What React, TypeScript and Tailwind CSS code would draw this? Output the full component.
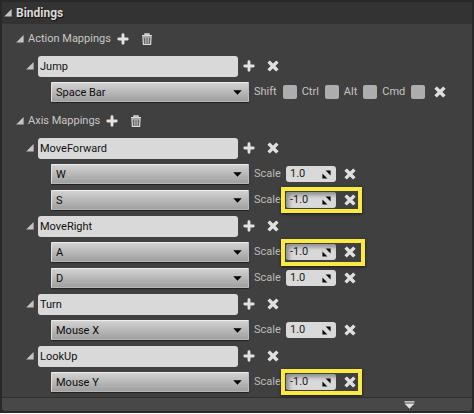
import type { ReactNode } from "react";

type Highlight = "normal" | "wide";
type Binding = { key: string; scale: string; highlight?: Highlight };
type Axis = { name: string; bindings: Binding[] };

const axes: Axis[] = [
  {
    name: "MoveForward",
    bindings: [
      { key: "W", scale: "1.0" },
      { key: "S", scale: "-1.0", highlight: "normal" },
    ],
  },
  {
    name: "MoveRight",
    bindings: [
      { key: "A", scale: "-1.0", highlight: "wide" },
      { key: "D", scale: "1.0" },
    ],
  },
  { name: "Turn", bindings: [{ key: "Mouse X", scale: "1.0" }] },
  { name: "LookUp", bindings: [{ key: "Mouse Y", scale: "-1.0", highlight: "normal" }] },
];

const keys = ["Space Bar", "W", "S", "A", "D", "Mouse X", "Mouse Y"];

function Expander({ label }: { label: string }) {
  return (
    <button type="button" aria-label={`Collapse ${label}`} className="block size-2 shrink-0">
      <svg viewBox="0 0 8 8" className="block size-2">
        <path d="M7.6 0V7.4H0.2Z" fill="#c4c4c4" />
      </svg>
    </button>
  );
}

function IconButton({ label, children }: { label: string; children: ReactNode }) {
  return (
    <button type="button" aria-label={label} className="flex size-3 shrink-0 items-center justify-center">
      {children}
    </button>
  );
}

function Plus() {
  return (
    <svg viewBox="0 0 12 12" className="size-3">
      <path d="M6 1.8V10.2M1.8 6H10.2" stroke="#e2e2e2" strokeWidth="2.9" strokeLinecap="round" />
    </svg>
  );
}

function Cross() {
  return (
    <svg viewBox="0 0 12 12" className="size-3">
      <path d="M2.8 2.8L9.2 9.2M9.2 2.8L2.8 9.2" stroke="#e0e0e0" strokeWidth="3.4" strokeLinecap="square" />
    </svg>
  );
}

function Trash() {
  return (
    <svg viewBox="0 0 12 12" className="size-3">
      <path d="M1 2.7H11M4 2.2V1H8V2.2" fill="none" stroke="#dedede" strokeWidth="1.3" />
      <path d="M2 4H10L9.6 11.3H2.4Z" fill="#4a4a4a" stroke="#dedede" strokeWidth="1.2" />
      <path d="M4.3 4.5V10.5M6 4.5V10.5M7.7 4.5V10.5" stroke="#d4d4d4" strokeWidth="0.9" />
    </svg>
  );
}

function SectionRow({ title }: { title: string }) {
  return (
    <div className="flex h-[29px] items-center pl-3.5">
      <Expander label={title} />
      <h2 className="ml-1 text-[#c8c8c8]">{title}</h2>
      <div className="ml-1.5 flex gap-3">
        <IconButton label={`Add to ${title}`}>
          <Plus />
        </IconButton>
        <IconButton label={`Clear ${title}`}>
          <Trash />
        </IconButton>
      </div>
    </div>
  );
}

function NameRow({ name }: { name: string }) {
  return (
    <div className="flex h-[26px] items-center pl-6">
      <Expander label={name} />
      <input
        aria-label="Mapping name"
        defaultValue={name}
        className="ml-1 h-[21px] w-[200px] min-w-0 rounded-[3px] bg-[#d9d9d9] px-0.5 text-[#111]"
      />
      <div className="ml-[5px] flex gap-3">
        <IconButton label={`Add binding to ${name}`}>
          <Plus />
        </IconButton>
        <IconButton label={`Remove ${name}`}>
          <Cross />
        </IconButton>
      </div>
    </div>
  );
}

function KeySelect({ value }: { value: string }) {
  return (
    <div className="relative w-[198px] shrink-0">
      <select
        aria-label="Key"
        defaultValue={value}
        className="block h-5 w-full appearance-none rounded-[1px] border border-t-[#eeeeee] border-r-[#bdbdbd] border-b-[#b5b5b5] border-l-[#e2e2e2] bg-linear-to-b from-[#d2d2d2] to-[#a0a0a0] pt-px pr-5 pl-1 text-[#0c0c0c] shadow-[0_1px_1px_#222]"
      >
        {keys.map((key) => (
          <option key={key}>{key}</option>
        ))}
      </select>
      <svg viewBox="0 0 9 5" className="pointer-events-none absolute top-2 right-[7px] h-[5px] w-[9px]">
        <path d="M0.3 0.3H8.7L4.5 4.8Z" fill="#000" />
      </svg>
    </div>
  );
}

function Modifier({ label }: { label: string }) {
  return (
    <label className="flex items-center gap-1.5 text-[#c4c4c4]">
      {label}
      <input type="checkbox" className="block size-3.5 appearance-none rounded-[2px] bg-[#adadad] checked:bg-[#e8a33a]" />
    </label>
  );
}

function ScaleField({ value, marked }: { value: string; marked: boolean }) {
  return (
    <label className="flex items-center text-[#bcbcbc]">
      <span className="w-8">Scale</span>
      <span
        className={`flex h-4 w-[50px] items-center rounded-[3px] bg-[#d9d9d9] pr-[5px] pl-1 ${
          marked ? "shadow-[inset_3px_3px_4px_#8c8c8c]" : ""
        }`}
      >
        <input defaultValue={value} className="h-4 w-full min-w-0 bg-transparent text-[#222]" />
        <svg viewBox="0 0 9 9" className="size-[9px] shrink-0">
          <path d="M3.6 0.4H8.6V5.4ZM0.4 3.6V8.6H5.4Z" fill="#0a0a0a" />
        </svg>
      </span>
    </label>
  );
}

function BindingRow({ binding }: { binding: Binding }) {
  const { key, scale, highlight } = binding;
  return (
    <div className="flex h-[26px] items-center pl-[49px]">
      <KeySelect value={key} />
      <div className="relative ml-[5px] flex items-center gap-2">
        <ScaleField value={scale} marked={highlight !== undefined} />
        <IconButton label={`Remove ${key}`}>
          <Cross />
        </IconButton>
        {highlight && (
          <span
            className={`pointer-events-none absolute -top-[5px] left-[27px] border-4 border-[#fbea45] shadow-[0_1px_3px_#181818] ${
              highlight === "wide" ? "-right-[9px] -bottom-[6px]" : "-right-[6px] -bottom-[5px]"
            }`}
          />
        )}
      </div>
    </div>
  );
}

export default function App() {
  return (
    <div className="bg-[#292929] px-0.5 pt-0.5 pb-0.5 font-['Roboto','Liberation_Sans',sans-serif] text-[11px] leading-4">
      <main className="overflow-hidden rounded-b-[4px] bg-[#404040]">
        <header className="flex h-[22px] items-center gap-1 bg-[#333333] pl-0.5">
          <Expander label="Bindings" />
          <h1 className="text-[12px] font-bold text-[#dadada] [text-shadow:1px_1px_1px_#111]">Bindings</h1>
        </header>

        <section className="pb-px">
          <SectionRow title="Action Mappings" />
          <NameRow name="Jump" />
          <div className="flex h-[26px] items-center pl-[49px]">
            <KeySelect value="Space Bar" />
            <div className="ml-[5px] flex items-center gap-[5px]">
              <Modifier label="Shift" />
              <Modifier label="Ctrl" />
              <Modifier label="Alt" />
              <Modifier label="Cmd" />
            </div>
            <div className="ml-[9px]">
              <IconButton label="Remove Space Bar">
                <Cross />
              </IconButton>
            </div>
          </div>
        </section>

        <section className="pb-0.5">
          <SectionRow title="Axis Mappings" />
          {axes.map((axis) => (
            <div key={axis.name}>
              <NameRow name={axis.name} />
              {axis.bindings.map((binding) => (
                <BindingRow key={binding.key} binding={binding} />
              ))}
            </div>
          ))}
        </section>

        <footer className="flex h-3.5 items-center justify-end border-t border-[#303030] bg-[#484848] pr-[57px]">
          <button type="button" aria-label="Show advanced" className="block">
            <svg viewBox="0 0 11 8" className="block h-2 w-[11px]">
              <path d="M0.5 0.2H10.5V1.4H0.5ZM0.5 2.6H10.5L5.5 7.8Z" fill="#e2e2e2" />
            </svg>
          </button>
        </footer>
      </main>
    </div>
  );
}
